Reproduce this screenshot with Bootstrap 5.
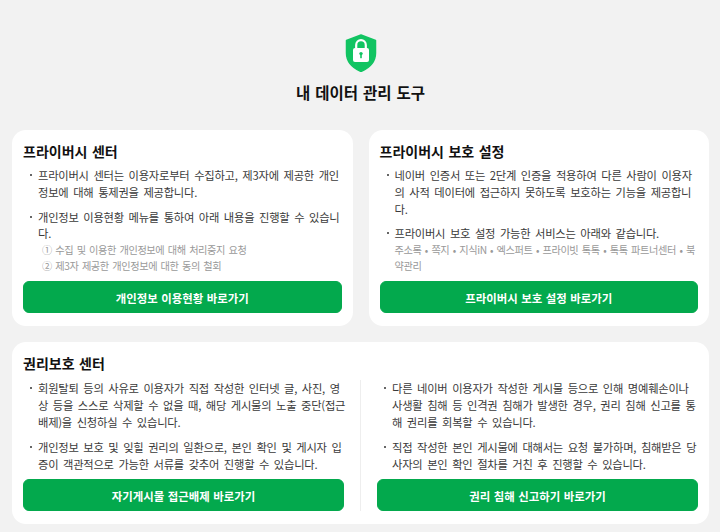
<!DOCTYPE html>
<html lang="ko"><head><meta charset="utf-8">
<link href="https://cdn.jsdelivr.net/npm/bootstrap@5.3.0/dist/css/bootstrap.min.css" rel="stylesheet">
<style>
html,body{height:532px;overflow:hidden}
body{background:#f2f2f2;font-family:"Noto Sans CJK KR","Liberation Sans",sans-serif;color:#333;font-size:11.3px;line-height:16.8px;word-spacing:1.8px;letter-spacing:-.25px;word-break:break-all}
.pg{padding:34px 11px 0 12px}
.hero{height:96px;text-align:center}
.hero svg{display:block;margin:0 auto 9px}
.hero h1{font-size:15.5px;line-height:22px;font-weight:700;color:#111;margin:0;word-spacing:.6px;letter-spacing:0}
.pane{background:#fff;border-radius:14px;padding:11px 11px 13px}
.pane h2{font-size:14px;line-height:20px;font-weight:700;color:#111;margin:0 0 6px;word-spacing:.6px;letter-spacing:0}
.pv{flex:1 1 0;height:196px;display:flex;flex-direction:column}
.pv .go{margin-top:auto}
.pts{list-style:none;margin:0;padding:0 0 0 15px}
.pts>li{position:relative;margin-bottom:8px;color:#3a3a3a}
.pts>li::before{content:"";position:absolute;left:-8px;top:7px;width:2px;height:2px;border-radius:50%;background:#333}
.pts>li:last-child{margin-bottom:0}
.sub{color:#999;font-size:10.2px;line-height:16px;word-spacing:1px;letter-spacing:-.4px}
.go{display:block;height:32px;line-height:32px;background:#03a94d;border-color:#03a94d;color:#fff;font-size:11.4px;font-weight:700;border-radius:6px;padding:0;text-align:center;word-spacing:.4px;letter-spacing:0}
.go:hover{background:#03a94d;color:#fff}
.cl{flex:1 1 0;min-width:0;display:flex;flex-direction:column}
.wide{margin-top:16px;height:182px}
.wide h2{margin-bottom:7px}
.wide .pts>li{margin-bottom:9px}
.wide .pts>li:last-child{margin-bottom:0}
.wide .pts>li.fit{margin-right:-4px}
.vr2{width:1px;background:#eee;margin:0 16px 0 16px}
</style></head><body>
<div class="pg">
<div class="hero">
<svg width="32" height="38" viewBox="0 0 32 38"><path d="M16 1 L30.5 6.5 V19 C30.5 28 24 34 16 37.5 C8 34 1.5 28 1.5 19 V6.5 Z" fill="#12c462" stroke="#12c462" stroke-linejoin="round" stroke-width="1.5"/><rect x="8" y="14" width="16" height="14" rx="2" fill="#fff"/><path d="M11.2 15 V11 a4.8 4.8 0 0 1 9.6 0 V15" fill="none" stroke="#fff" stroke-width="2.2"/><circle cx="16" cy="19.6" r="1.7" fill="#12c462"/><rect x="15.2" y="20" width="1.6" height="4.2" fill="#12c462"/></svg>
<h1>내 데이터 관리 도구</h1>
</div>
<div class="d-flex gap-3">
<section class="pane pv">
<h2>프라이버시 센터</h2>
<ul class="pts">
<li>프라이버시 센터는 이용자로부터 수집하고, 제3자에 제공한 개인정보에 대해 통제권을 제공합니다.</li>
<li>개인정보 이용현황 메뉴를 통하여 아래 내용을 진행할 수 있습니다.
<div class="sub ps-1">① 수집 및 이용한 개인정보에 대해 처리중지 요청<br>② 제3자 제공한 개인정보에 대한 동의 철회</div></li>
</ul>
<a href="#" class="btn go">개인정보 이용현황 바로가기</a>
</section>
<section class="pane pv">
<h2>프라이버시 보호 설정</h2>
<ul class="pts">
<li>네이버 인증서 또는 2단계 인증을 적용하여 다른 사람이 이용자의 사적 데이터에 접근하지 못하도록 보호하는 기능을 제공합니다.</li>
<li>프라이버시 보호 설정 가능한 서비스는 아래와 같습니다.
<div class="sub">주소록 • 쪽지 • 지식iN • 엑스퍼트 • 프라이빗 톡톡 • 톡톡 파트너센터 • 북약관리</div></li>
</ul>
<a href="#" class="btn go">프라이버시 보호 설정 바로가기</a>
</section>
</div>
<section class="pane wide d-flex flex-column">
<h2>권리보호 센터</h2>
<div class="d-flex flex-grow-1">
<div class="cl">
<ul class="pts">
<li class="fit">회원탈퇴 등의 사유로 이용자가 직접 작성한 인터넷 글, 사진, 영상 등을 스스로 삭제할 수 없을 때, 해당 게시물의 노출 중단(접근배제)을 신청하실 수 있습니다.</li>
<li>개인정보 보호 및 잊힐 권리의 일환으로, 본인 확인 및 게시자 입증이 객관적으로 가능한 서류를 갖추어 진행할 수 있습니다.</li>
</ul>
<a href="#" class="btn go mt-auto">자기게시물 접근배제 바로가기</a>
</div>
<div class="vr2"></div>
<div class="cl">
<ul class="pts">
<li>다른 네이버 이용자가 작성한 게시물 등으로 인해 명예훼손이나 사생활 침해 등 인격권 침해가 발생한 경우, 권리 침해 신고를 통해 권리를 회복할 수 있습니다.</li>
<li>직접 작성한 본인 게시물에 대해서는 요청 불가하며, 침해받은 당사자의 본인 확인 절차를 거친 후 진행할 수 있습니다.</li>
</ul>
<a href="#" class="btn go mt-auto">권리 침해 신고하기 바로가기</a>
</div>
</div>
</section>
</div>
<script src="https://cdn.jsdelivr.net/npm/bootstrap@5.3.0/dist/js/bootstrap.bundle.min.js"></script>
</body></html>
